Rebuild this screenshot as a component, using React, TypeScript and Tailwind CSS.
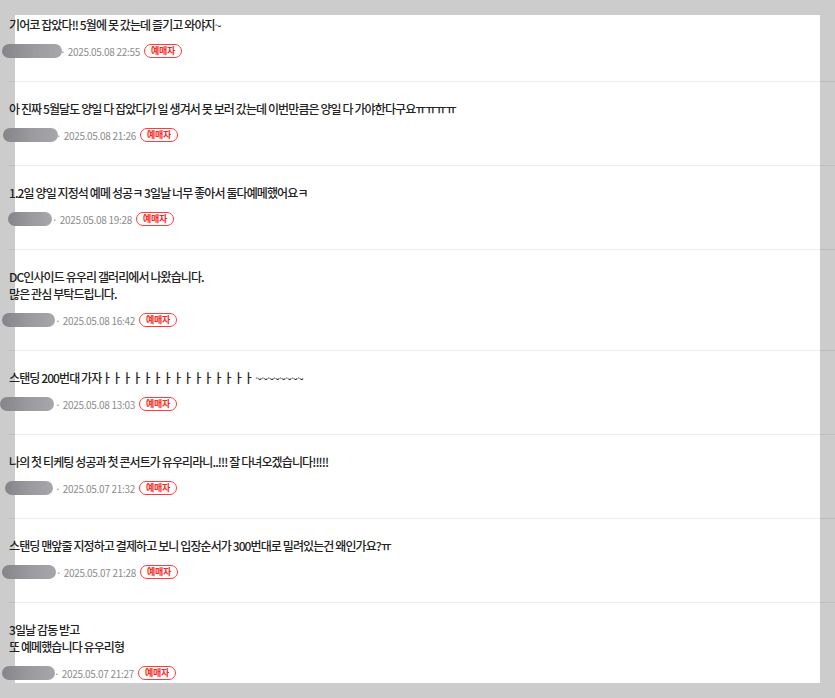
import React from "react";

type Comment = {
  lines: string[];
  date: string;
  nick: string; // width class of the hidden nickname
  blob: string; // width / offset class of the smudge over it
};

const comments: Comment[] = [
  {
    lines: ["기어코 잡았다!! 5월에 못 갔는데 즐기고 와야지~"],
    date: "2025.05.08 22:55",
    nick: "w-[49px]",
    blob: "w-[60px] left-[-7px]",
  },
  {
    lines: ["아 진짜 5월달도 양일 다 잡았다가 일 생겨서 못 보러 갔는데 이번만큼은 양일 다 가야한다구요ㅠㅠㅠㅠ"],
    date: "2025.05.08 21:26",
    nick: "w-[45px]",
    blob: "w-[55px] left-[-6px]",
  },
  {
    lines: ["1.2일 양일 지정석 예메 성공ㅋ 3일날 너무 좋아서 둘다예메했어요ㅋ"],
    date: "2025.05.08 19:28",
    nick: "w-[41px]",
    blob: "w-[44px] left-[-1px]",
  },
  {
    lines: ["DC인사이드 유우리 갤러리에서 나왔습니다.", "많은 관심 부탁드립니다."],
    date: "2025.05.08 16:42",
    nick: "w-[44px]",
    blob: "w-[53px] left-[-7px]",
  },
  {
    lines: ["스탠딩 200번대 가자ㅏㅏㅏㅏㅏㅏㅏㅏㅏㅏㅏㅏㅏㅏㅏ ~~~~~~~~"],
    date: "2025.05.08 13:03",
    nick: "w-[44px]",
    blob: "w-[54px] left-[-9px]",
  },
  {
    lines: ["나의 첫 티케팅 성공과 첫 콘서트가 유우리라니..!!! 잘 다녀오겠습니다!!!!!"],
    date: "2025.05.07 21:32",
    nick: "w-[44px]",
    blob: "w-[48px] left-[-4px]",
  },
  {
    lines: ["스탠딩 맨앞줄 지정하고 결제하고 보니 입장순서가 300번대로 밀려있는건 왜인가요?ㅠ"],
    date: "2025.05.07 21:28",
    nick: "w-[45px]",
    blob: "w-[54px] left-[-7px]",
  },
  {
    lines: ["3일날 감동 받고", "또 예메했습니다 유우리형"],
    date: "2025.05.07 21:27",
    nick: "w-[43px]",
    blob: "w-[53px] left-[-7px]",
  },
];

const font = { fontFamily: '"Noto Sans CJK KR", "Noto Sans", sans-serif' };

const CommentItem = ({ c }: { c: Comment }) => (
  <li className="border-b border-[rgba(40,30,100,0.09)] pt-[18px] pb-[21px]">
    <div className="text-[12px] font-medium leading-[17px] tracking-[-0.9px] text-[#222222]">
      {c.lines.map((l, i) => (
        <p key={i}>{l}</p>
      ))}
    </div>
    <div className="mt-[9px] flex h-[18px] items-center">
      <span className={`relative h-[14px] ${c.nick}`}>
        <span
          className={`absolute top-0 h-[14px] rounded-full bg-gradient-to-r from-[#858589] via-[#9a9a9e] to-[#a7a7ab] blur-[0.6px] ${c.blob}`}
        />
      </span>
      <span className="ml-[2px] text-[10px] text-[#8c8c8c]">·</span>
      <span className="ml-[2px] text-[10px] tracking-[-0.3px] text-[#8c8c8c]">{c.date}</span>
      <span className="ml-[4px] flex h-[14px] items-center rounded-full border border-[#ff3b3b] px-[6px] text-[9px] font-bold tracking-[-0.3px] text-[#f22a22]">
        예매자
      </span>
    </div>
  </li>
);

export default function App() {
  return (
    <div className="h-[698px] w-[835px] overflow-hidden bg-[#cccccc] pl-[15px] pt-[15px]" style={font}>
      <div className="flex h-[668px] w-[805px] flex-col bg-white">
        <ul className="-ml-[6px] -mt-[17px] w-[826px]">
          {comments.map((c, i) => (
            <CommentItem key={i} c={c} />
          ))}
        </ul>
      </div>
    </div>
  );
}
